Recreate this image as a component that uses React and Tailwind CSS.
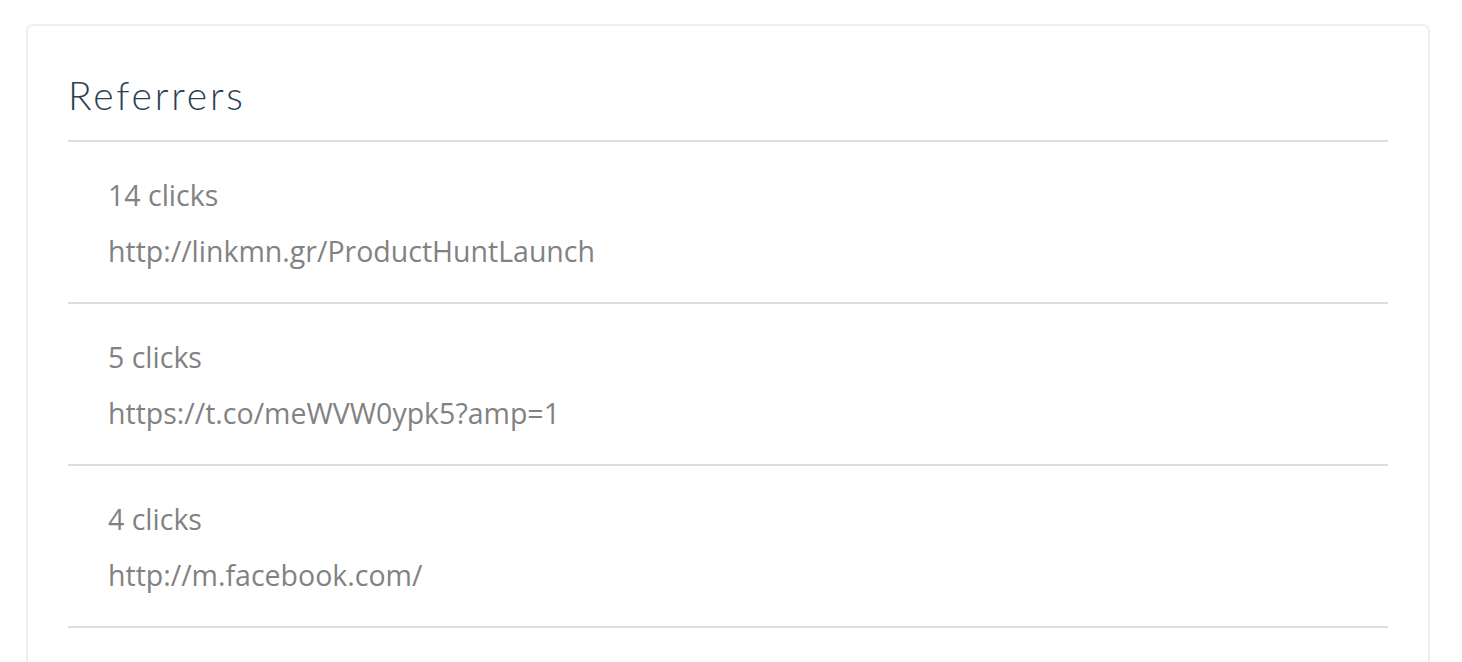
export default function App() {
  const rows = [
    ["14 clicks", "http://linkmn.gr/ProductHuntLaunch"],
    ["5 clicks", "https://t.co/meWVW0ypk5?amp=1"],
    ["4 clicks", "http://m.facebook.com/"],
  ];
  return (
    <div className="min-h-[662px] bg-white pt-[24px] pl-[26px] pr-[32px]" style={{ fontFamily: '"Open Sans", sans-serif' }}>
      <div className="border-2 border-b-0 border-[#eeeeee] rounded-t-[7px] px-[40px] pt-[45px] pb-[34px]">
        <h2 className="text-[39px] leading-[48px] font-light text-[#2c3e50] tracking-[2.8px] pb-[21px] border-b-2 border-[#dddddd]" style={{ fontFamily: 'Lato, sans-serif' }}>
          Referrers
        </h2>
        {rows.map(([c, u]) => (
          <div key={u} className="pl-[40px] pt-[37px] pb-[35px] border-b-2 border-[#dddddd] text-[#828282] font-normal text-[28.5px]">
            <div className="leading-[32px]">{c}</div>
            <div className="leading-[32px] mt-[24px]">{u}</div>
          </div>
        ))}
      </div>
    </div>
  );
}
